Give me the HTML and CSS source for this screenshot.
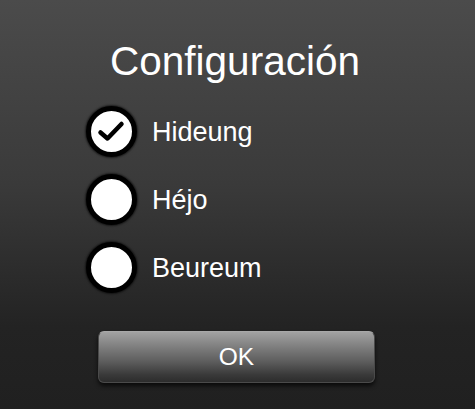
FILE: index.html
```html
<!DOCTYPE html>
<html lang="es">
<head>
<meta charset="utf-8">
<title>Configuración</title>
<link rel="stylesheet" href="styles.css">
</head>
<body>
<main class="dialog">
  <h1 class="title">Configuración</h1>
  <ul class="options">
    <li class="option">
      <span class="radio checked">
        <svg viewBox="0 0 41 41" width="41" height="41"><path d="M9.5 21.5 L16.5 27.5 L30.5 13" fill="none" stroke="#000" stroke-width="4.5" stroke-linecap="round" stroke-linejoin="round"/></svg>
      </span>
      <span class="label">Hideung</span>
    </li>
    <li class="option">
      <span class="radio"></span>
      <span class="label">Héjo</span>
    </li>
    <li class="option">
      <span class="radio"></span>
      <span class="label">Beureum</span>
    </li>
  </ul>
  <button class="ok" type="button">OK</button>
</main>
</body>
</html>
```

FILE: styles.css
```css
html, body {
  margin: 0;
  padding: 0;
}
body {
  width: 475px;
  height: 409px;
  overflow: hidden;
  background: linear-gradient(to bottom, #4b4b4b 0%, #3a3a3a 45%, #232323 80%, #202020 100%);
  font-family: "Liberation Sans", Arial, sans-serif;
  color: #fff;
}
.dialog {
  display: flex;
  flex-direction: column;
  align-items: center;
  padding-top: 41px;
}
.title {
  margin: 0;
  font-size: 40.5px;
  line-height: 40px;
  font-weight: normal;
  color: #fff;
  margin-left: -5px;
}
.options {
  list-style: none;
  margin: 25px 0 0 0;
  padding: 0;
  align-self: flex-start;
  margin-left: 86px;
  display: flex;
  flex-direction: column;
  gap: 17px;
}
.option {
  display: flex;
  align-items: center;
  gap: 15px;
  height: 51px;
}
.radio {
  box-sizing: border-box;
  width: 51px;
  height: 51px;
  border: 5px solid #000;
  border-radius: 50%;
  background: #fff;
  box-shadow: 0 0 2px 1px rgba(0,0,0,0.6);
  display: flex;
  align-items: center;
  justify-content: center;
}
.radio svg {
  display: block;
}
.label {
  font-size: 27px;
  line-height: 30px;
  color: #fff;
  padding-top: 1px;
}
.ok {
  margin-top: 38px;
  width: 277px;
  height: 52px;
  margin-left: -2px;
  border: 1px solid #4a4a4a;
  border-top-color: #a8a8a8;
  border-radius: 6px;
  background: linear-gradient(to bottom, #a2a2a2 0%, #7e7e7e 30%, #5c5c5c 60%, #3a3a3a 85%, #2c2c2c 100%);
  box-shadow: 0 3px 4px rgba(0,0,0,0.7);
  color: #fff;
  font-family: "Liberation Sans", Arial, sans-serif;
  font-size: 24.5px;
  padding: 0;
}
```
